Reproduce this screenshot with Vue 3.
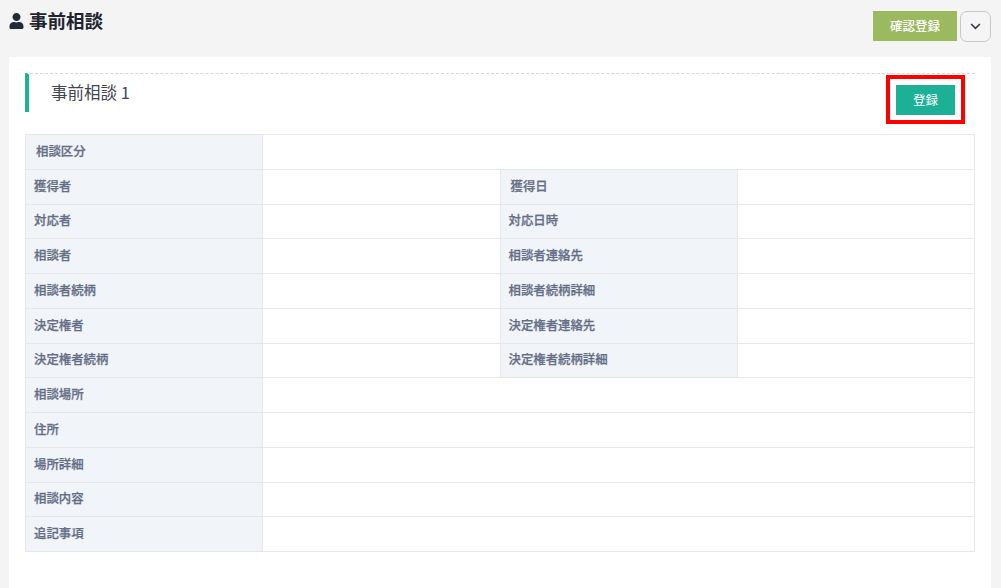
<template>
  <div class="page">
    <!-- ページ見出し -->
    <header class="page-head">
      <h1 class="page-title">
        <svg class="user-icon" viewBox="0 0 448 512" aria-hidden="true">
          <path fill="currentColor" d="M224 256c70.700 0 128-57.300 128-128S294.700 0 224 0 96 57.300 96 128s57.300 128 128 128zm89.600 32h-16.700c-22.200 10.200-46.900 16-72.900 16s-50.600-5.800-72.900-16h-16.700C60.200 288 0 348.200 0 422.400V464c0 26.500 21.500 48 48 48h352c26.500 0 48-21.500 48-48v-41.600c0-74.200-60.200-134.400-134.400-134.400z" />
        </svg>
        事前相談
      </h1>
      <div class="head-actions">
        <button type="button" class="confirm-button">確認登録</button>
        <button type="button" class="toggle-button" aria-label="開く">
          <svg viewBox="0 0 12 8" width="11" height="7" aria-hidden="true">
            <path d="M1 1.200 6 6.200l5-5" fill="none" stroke="#2f3b4c" stroke-width="1.800" />
          </svg>
        </button>
      </div>
    </header>

    <!-- 本体 -->
    <section class="card">
      <div class="section-head">
        <h2 class="section-title">事前相談 1</h2>
        <div class="highlight">
          <button type="button" class="register-button">登録</button>
        </div>
      </div>

      <table class="detail-table">
        <colgroup>
          <col class="col-label" />
          <col class="col-value" />
          <col class="col-label" />
          <col class="col-value" />
        </colgroup>
        <tbody>
          <tr v-for="row in rows" :key="row[0].label">
            <template v-if="row.length === 1">
              <th :class="{ indent: row[0].indent }">{{ row[0].label }}</th>
              <td colspan="3"></td>
            </template>
            <template v-else>
              <th :class="{ indent: row[0].indent }">{{ row[0].label }}</th>
              <td></td>
              <th :class="{ indent: row[1].indent }">{{ row[1].label }}</th>
              <td></td>
            </template>
          </tr>
        </tbody>
      </table>
    </section>
  </div>
</template>

<script setup>
const rows = [
  [{ label: '相談区分', indent: true }],
  [{ label: '獲得者' }, { label: '獲得日', indent: true }],
  [{ label: '対応者' }, { label: '対応日時' }],
  [{ label: '相談者' }, { label: '相談者連絡先' }],
  [{ label: '相談者続柄' }, { label: '相談者続柄詳細' }],
  [{ label: '決定権者' }, { label: '決定権者連絡先' }],
  [{ label: '決定権者続柄' }, { label: '決定権者続柄詳細' }],
  [{ label: '相談場所' }],
  [{ label: '住所' }],
  [{ label: '場所詳細' }],
  [{ label: '相談内容' }],
  [{ label: '追記事項' }],
];
</script>

<style>
html,
body {
  margin: 0;
  background: #f4f4f4;
}
</style>

<style scoped>
.page {
  box-sizing: border-box;
  height: 588px;
  overflow: hidden;
  padding: 0 10px 0 9px;
  font-family: "Noto Sans CJK JP", "Liberation Sans", sans-serif;
  background: #f4f4f4;
}

.page-head {
  display: flex;
  justify-content: space-between;
  align-items: flex-start;
  height: 57px;
  padding-top: 11px;
  box-sizing: border-box;
}

.page-title {
  display: flex;
  align-items: center;
  gap: 5px;
  margin: -2px 0 0;
  font-size: 18.500px;
  line-height: 22px;
  font-weight: 700;
  color: #1f2530;
}

.user-icon {
  width: 15px;
  height: 16px;
  margin-top: 2px;
  color: #1f2a3a;
}

.head-actions {
  display: flex;
  gap: 3px;
}

.confirm-button {
  width: 84px;
  height: 30px;
  padding: 0 0 2px;
  border: 0;
  background: #9bba5f;
  color: #fff;
  font-family: inherit;
  font-size: 12.500px;
  font-weight: 500;
}

.toggle-button {
  display: flex;
  align-items: center;
  justify-content: center;
  width: 31px;
  height: 31px;
  padding: 0;
  border: 1px solid #c8c8c8;
  border-radius: 7px;
  background: #f5f5f5;
}

.card {
  height: 531px;
  padding: 16px 16px 0;
  box-sizing: border-box;
  background: #fff;
}

.section-head {
  position: relative;
  height: 39px;
  margin-bottom: 22px;
  padding-left: 22px;
  border-left: 4px solid #1ab394;
  border-top: 1px dashed #d8d8d8;
  box-sizing: border-box;
}

.section-title {
  margin: 0;
  padding-top: 6px;
  font-size: 16.500px;
  line-height: 24px;
  font-weight: 400;
  color: #3f4650;
}

/* 赤枠は説明用の注釈 */
.highlight {
  position: absolute;
  top: 1px;
  right: 10px;
  display: flex;
  align-items: center;
  justify-content: center;
  width: 79px;
  height: 49px;
  box-sizing: border-box;
  border: 4px solid #ff0000;
}

.register-button {
  width: 59px;
  height: 30px;
  padding: 0 0 1px;
  border: 0;
  background: #1cb196;
  color: #fff;
  font-family: inherit;
  font-size: 12.500px;
}

.detail-table {
  width: 949px;
  height: 417px;
  table-layout: fixed;
  border-collapse: collapse;
  border: 1px solid #e7e7e7;
}

.col-label,
.col-value {
  width: 237.250px;
}

.detail-table th,
.detail-table td {
  height: 34.750px;
  padding: 0;
  border: 1px solid #e7e7e7;
  box-sizing: border-box;
}

.detail-table th {
  padding: 0 0 2px 8px;
  background: #f1f4f9;
  color: #636d85;
  font-size: 12.400px;
  font-weight: 500;
  text-align: left;
  -webkit-text-stroke: 0.25px #636d85;
}

.detail-table th.indent {
  padding-left: 10px;
}
</style>
